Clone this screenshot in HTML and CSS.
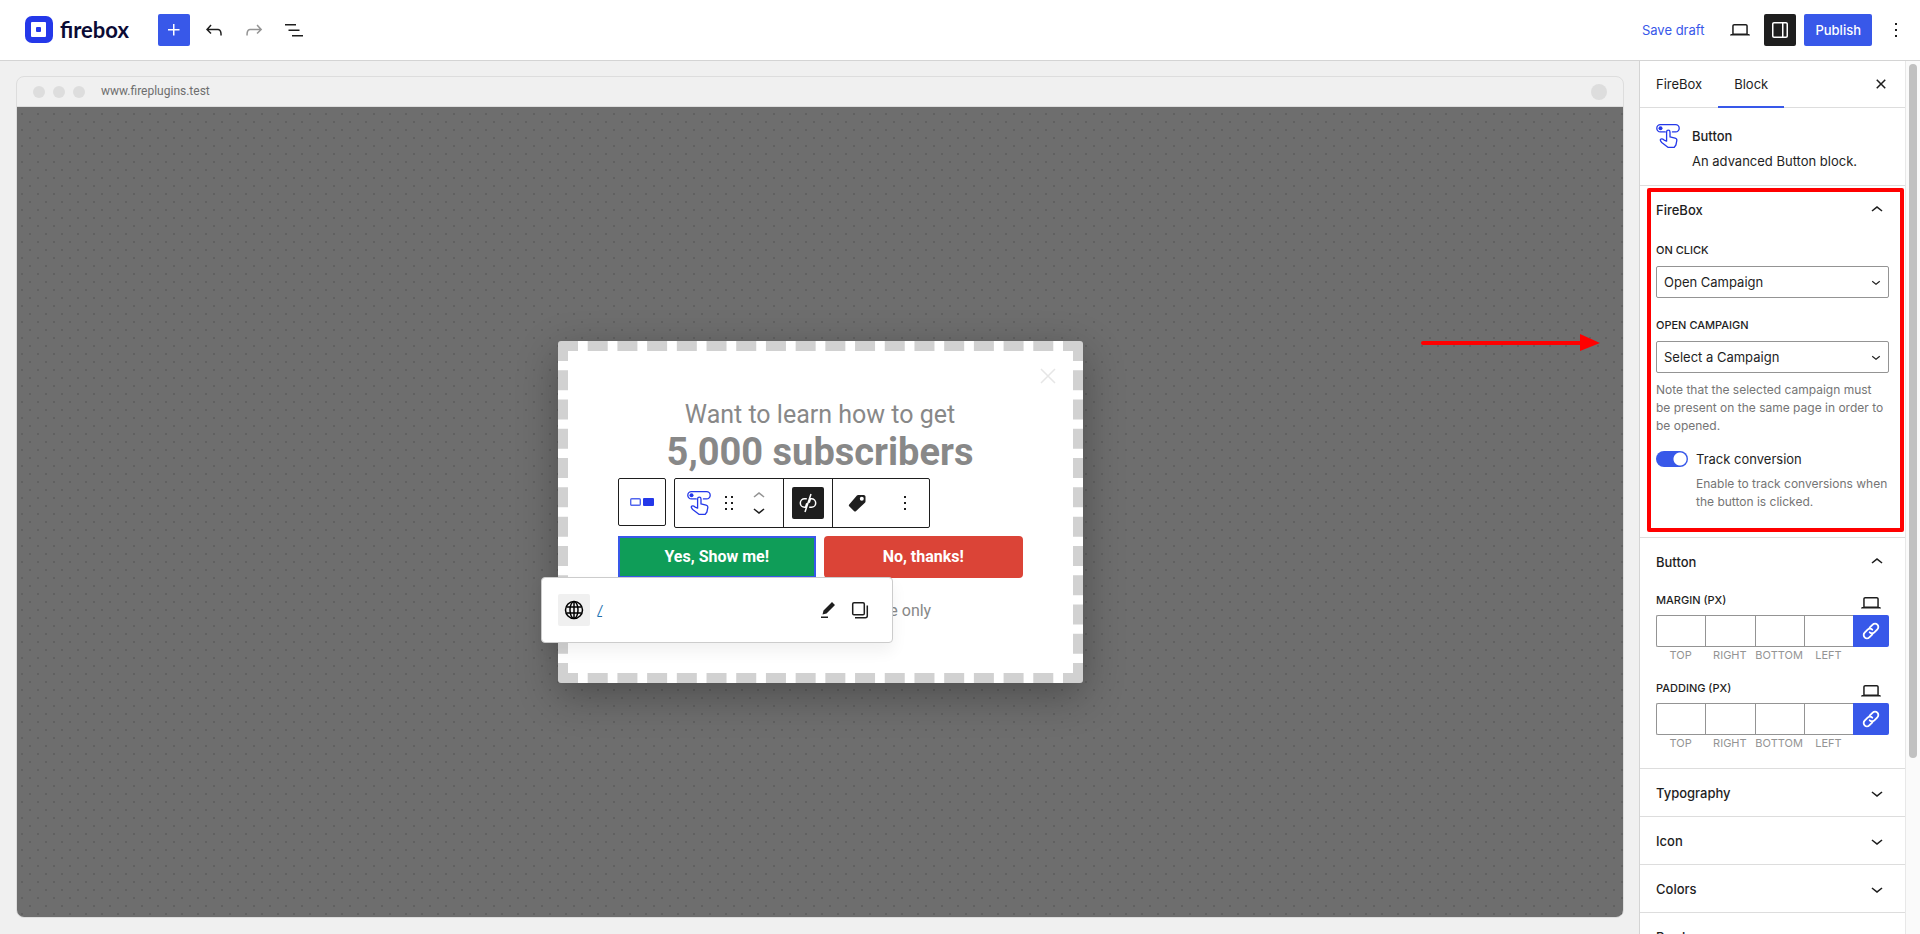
FILE: index.html
```html
<!DOCTYPE html>
<html lang="en">
<head>
    <meta charset="UTF-8">
    <meta name="viewport" content="width=device-width, initial-scale=1.0">
    <title>FireBox</title>
    <link rel="stylesheet" href="styles.css">
</head>
<body>
    <!-- Shared icons -->
    <svg class="sprite" aria-hidden="true">
        <symbol id="chevron-down" viewBox="0 0 24 24"><path d="M17.5 11.6L12 16l-5.5-4.4.9-1.2L12 14l4.5-3.6 1 1.2z"/></symbol>
        <symbol id="chevron-up" viewBox="0 0 24 24"><path d="M6.5 12.4L12 8l5.5 4.4-.9 1.2L12 10l-4.5 3.6-1-1.2z"/></symbol>
        <symbol id="laptop" viewBox="0 0 24 24"><path d="M20.5 16h-.7V8c0-1.1-.9-2-2-2H6.2c-1.1 0-2 .9-2 2v8h-.7c-.8 0-1.5.7-1.5 1.5h20c0-.8-.7-1.5-1.5-1.5zM5.7 8c0-.3.2-.5.5-.5h11.6c.3 0 .5.2.5.5v7.6H5.7V8z"/></symbol>
        <symbol id="more" viewBox="0 0 24 24"><path d="M13 19h-2v-2h2v2zm0-6h-2v-2h2v2zm0-6h-2V5h2v2z"/></symbol>
        <symbol id="tap-button" viewBox="0 0 24 24">
            <g fill="none" stroke="#2438e9" stroke-width="1.3" stroke-linecap="round" stroke-linejoin="round">
                <path d="M9.3 7.9H4.4a3.6 3.6 0 0 1 0-7.2h15.2a3.6 3.6 0 0 1 0 7.2h-3.2"/>
                <path d="M10.6 17.2V7.9a1.7 1.7 0 0 1 3.4 0v5l5.1 1.2c1.2.3 1.9 1.3 1.7 2.5l-.9 4.4-1.7 2.3h-6.3l-6.2-4.9c-1.2-1.1-2-2.8-.8-3.3 1-.4 2.2.1 3.2 1z"/>
            </g>
            <circle cx="4.5" cy="4.3" r="2" fill="#2438e9"/>
        </symbol>
        <symbol id="link" viewBox="0 0 24 24">
            <g fill="none" stroke="#fff" stroke-width="2" stroke-linecap="round" stroke-linejoin="round" transform="rotate(-45 12 12)">
                <path d="M10.5 15.6H5.8a3.6 3.6 0 0 1 0-7.2h4.6a3.6 3.6 0 0 1 3.6 3.6"/>
                <path d="M13.5 8.4h4.7a3.6 3.6 0 0 1 0 7.2h-4.6A3.6 3.6 0 0 1 10 12"/>
            </g>
        </symbol>
    </svg>

    <header class="topbar">
        <a class="logo" href="#home">
            <svg width="28" height="28" viewBox="0 0 28 28" aria-hidden="true">
                <rect width="28" height="27" rx="7" fill="#2438e9"/>
                <rect x="6" y="6" width="15" height="15" rx="1" fill="#fff"/>
                <rect x="11" y="11" width="5" height="5" rx="1" fill="#2438e9"/>
            </svg>
            <span>firebox</span>
        </a>
        <div class="tools">
            <button class="icon-btn primary" aria-label="Add block">
                <svg viewBox="0 0 24 24"><path d="M11 12.5V17.5H12.5V12.5H17.5V11H12.5V6H11V11H6V12.5H11Z"/></svg>
            </button>
            <button class="icon-btn" aria-label="Undo">
                <svg viewBox="0 0 24 24"><path d="M18.3 11.7c-.6-.6-1.4-.9-2.3-.9H6.7l2.9-3.3-1.1-1-4.5 5L8.5 16l1-1-2.7-2.7H16c.5 0 .9.2 1.3.5 1 1 1 3.4 1 4.5v.3h1.5v-.2c0-1.5 0-4.3-1.5-5.7z"/></svg>
            </button>
            <button class="icon-btn faded" aria-label="Redo">
                <svg viewBox="0 0 24 24"><path d="M15.6 6.5l-1.1 1 2.9 3.3H8c-.9 0-1.7.3-2.3.9-1.4 1.5-1.4 4.2-1.4 5.6v.2h1.5v-.3c0-1.1 0-3.5 1-4.5.3-.3.7-.5 1.3-.5h9.2L14.5 15l1.1 1.1 4.6-4.6-4.6-5z"/></svg>
            </button>
            <button class="icon-btn" aria-label="Document overview">
                <svg viewBox="0 0 24 24"><path d="M3 6h11v1.5H3V6Zm3.5 5.5h11V13h-11v-1.5ZM21 17H10v1.5h11V17Z"/></svg>
            </button>
        </div>
        <div class="actions">
            <button class="text-btn">Save draft</button>
            <button class="icon-btn" aria-label="Preview"><svg><use href="#laptop"/></svg></button>
            <button class="icon-btn dark" aria-label="Settings">
                <svg viewBox="0 0 24 24"><path d="M18 4H6c-1.1 0-2 .9-2 2v12c0 1.1.9 2 2 2h12c1.1 0 2-.9 2-2V6c0-1.1-.9-2-2-2zm-4 14.5H6c-.3 0-.5-.2-.5-.5V6c0-.3.2-.5.5-.5h8v13zm4.5-.5c0 .3-.2.5-.5.5h-2.5v-13H18c.3 0 .5.2.5.5v12z"/></svg>
            </button>
            <button class="publish-btn">Publish</button>
            <button class="icon-btn" aria-label="Options"><svg><use href="#more"/></svg></button>
        </div>
    </header>

    <div class="editor">
        <main class="stage">
            <div class="browser">
                <div class="browser-bar">
                    <span class="dot"></span>
                    <span class="dot"></span>
                    <span class="dot"></span>
                    <span class="url">www.fireplugins.test</span>
                    <span class="avatar"></span>
                </div>
                <div class="canvas">
                    <section class="popup">
                        <button class="popup-close" aria-label="Close">
                            <svg viewBox="0 0 16 16"><path d="M1 1l14 14M15 1L1 15" stroke="#e6e6e6" stroke-width="1.5"/></svg>
                        </button>
                        <h2 class="popup-title">Want to learn how to get <strong>5,000 subscribers</strong></h2>
                        <div class="popup-buttons">
                            <button class="cta yes">Yes, Show me!</button>
                            <button class="cta no">No, thanks!</button>

                            <div class="block-toolbar">
                                <div class="toolbar-box">
                                    <button class="tool parent" aria-label="Select parent block">
                                        <svg viewBox="0 0 24 24"><rect x=".7" y="8.7" width="9.6" height="6.6" rx="1" fill="none" stroke="#5266ee" stroke-width="1.4"/><rect x="13" y="8" width="11" height="8" rx="1" fill="#2438e9"/></svg>
                                    </button>
                                </div>
                                <div class="toolbar-box wide">
                                    <div class="segment">
                                        <button class="tool" aria-label="Button"><svg><use href="#tap-button"/></svg></button>
                                        <button class="tool drag" aria-label="Drag">
                                            <svg viewBox="0 0 24 24"><path d="M8 7h2V5H8v2zm0 6h2v-2H8v2zm0 6h2v-2H8v2zm6-14v2h2V5h-2zm0 8h2v-2h-2v2zm0 6h2v-2h-2v2z"/></svg>
                                        </button>
                                        <div class="movers">
                                            <button class="faded" aria-label="Move up"><svg><use href="#chevron-up"/></svg></button>
                                            <button aria-label="Move down"><svg><use href="#chevron-down"/></svg></button>
                                        </div>
                                    </div>
                                    <div class="segment">
                                        <button class="icon-btn dark" aria-label="Unlink">
                                            <svg viewBox="0 0 24 24"><path d="M10.8 7.7H8.6a4.3 4.3 0 0 0 0 8.6h.9l1.3-4.1M13.2 16.3h2.2a4.3 4.3 0 0 0 0-8.6h-.9l-1.3 4.1M15 3L9 21" fill="none" stroke="#fff" stroke-width="1.5"/></svg>
                                        </button>
                                    </div>
                                    <div class="segment spread">
                                        <button class="icon-btn" aria-label="Smart tags">
                                            <svg viewBox="0 0 24 24"><path fill-rule="evenodd" d="M13.2 4h5.5c1 0 1.8.8 1.8 1.8v4.6c0 .5-.2 1-.6 1.4l-9 8.4c-.5.5-1.2.5-1.7 0l-5-4.9c-.5-.5-.5-1.2 0-1.7L11.9 4.6c.3-.4.8-.6 1.3-.6zm3.6 1.8a2 2 0 1 0 0 4 2 2 0 0 0 0-4z"/></svg>
                                        </button>
                                        <button class="icon-btn" aria-label="More options"><svg><use href="#more"/></svg></button>
                                    </div>
                                </div>
                            </div>

                            <div class="link-popover">
                                <button class="icon-btn shaded" aria-label="Link">
                                    <svg viewBox="0 0 24 24"><g fill="none" stroke="#000" stroke-width="1.5"><circle cx="12" cy="12" r="8.5"/><ellipse cx="12" cy="12" rx="4" ry="8.5"/><path d="M12 3.5v17M4.5 9h15M4.5 15h15"/></g></svg>
                                </button>
                                <a href="#link">/</a>
                                <button class="icon-btn edit" aria-label="Edit link">
                                    <svg viewBox="0 0 24 24"><path d="m19 7-3-3-8.5 8.5-1 4 4-1L19 7Zm-7 11.5H5V20h7v-1.5Z"/></svg>
                                </button>
                                <button class="icon-btn" aria-label="Copy link">
                                    <svg viewBox="0 0 24 24"><g fill="none" stroke="#1e1e1e" stroke-width="1.5"><rect x="4.7" y="4.7" width="11.6" height="12" rx="1.3"/><path d="M19.3 7.5v10.2a2 2 0 0 1-2 2H7"/></g></svg>
                                </button>
                            </div>
                        </div>
                        <p class="popup-note">Available for a limited time only</p>
                    </section>
                </div>
            </div>
            <svg class="arrow" viewBox="0 0 180 18" aria-hidden="true"><path d="M2 9h160" stroke="#f00" stroke-width="4" stroke-linecap="round"/><path d="M159 0l20 9-20 8z" fill="#f00"/></svg>
        </main>

        <aside class="sidebar">
            <div class="settings">
                <div class="tabs">
                    <button class="tab">FireBox</button>
                    <button class="tab active">Block</button>
                    <button class="icon-btn close" aria-label="Close settings">
                        <svg viewBox="0 0 24 24"><path d="M12 13.06l3.712 3.713 1.061-1.06L13.061 12l3.712-3.712-1.06-1.06L12 10.938 8.288 7.227l-1.061 1.06L10.939 12l-3.712 3.712 1.06 1.061L12 13.061z"/></svg>
                    </button>
                </div>

                <div class="block-card">
                    <svg><use href="#tap-button"/></svg>
                    <div>
                        <h2>Button</h2>
                        <p>An advanced Button block.</p>
                    </div>
                </div>

                <section class="panel highlighted">
                    <button class="panel-toggle">FireBox <svg><use href="#chevron-up"/></svg></button>
                    <div class="panel-body">
                        <div class="field">
                            <label for="on-click">On click</label>
                            <div class="select">
                                <select id="on-click"><option>Open Campaign</option></select>
                                <svg><use href="#chevron-down"/></svg>
                            </div>
                        </div>
                        <div class="field">
                            <label for="campaign">Open campaign</label>
                            <div class="select">
                                <select id="campaign"><option>Select a Campaign</option></select>
                                <svg><use href="#chevron-down"/></svg>
                            </div>
                            <p class="help">Note that the selected campaign must be present on the same page in order to be opened.</p>
                        </div>
                        <div class="switch">
                            <input type="checkbox" id="track" checked>
                            <div>
                                <label for="track">Track conversion</label>
                                <p class="help">Enable to track conversions when the button is clicked.</p>
                            </div>
                        </div>
                    </div>
                </section>

                <section class="panel">
                    <button class="panel-toggle">Button <svg><use href="#chevron-up"/></svg></button>
                    <div class="panel-body spacing">
                        <fieldset class="sides">
                            <legend>Margin (px)</legend>
                            <button class="device" aria-label="Margin device"><svg><use href="#laptop"/></svg></button>
                            <div class="sides-row">
                                <div class="side"><input type="text" id="margin-top"><label for="margin-top">Top</label></div>
                                <div class="side"><input type="text" id="margin-right"><label for="margin-right">Right</label></div>
                                <div class="side"><input type="text" id="margin-bottom"><label for="margin-bottom">Bottom</label></div>
                                <div class="side"><input type="text" id="margin-left"><label for="margin-left">Left</label></div>
                                <button class="link-sides" aria-label="Link margins"><svg><use href="#link"/></svg></button>
                            </div>
                        </fieldset>
                        <fieldset class="sides">
                            <legend>Padding (px)</legend>
                            <button class="device" aria-label="Padding device"><svg><use href="#laptop"/></svg></button>
                            <div class="sides-row">
                                <div class="side"><input type="text" id="padding-top"><label for="padding-top">Top</label></div>
                                <div class="side"><input type="text" id="padding-right"><label for="padding-right">Right</label></div>
                                <div class="side"><input type="text" id="padding-bottom"><label for="padding-bottom">Bottom</label></div>
                                <div class="side"><input type="text" id="padding-left"><label for="padding-left">Left</label></div>
                                <button class="link-sides" aria-label="Link paddings"><svg><use href="#link"/></svg></button>
                            </div>
                        </fieldset>
                    </div>
                </section>

                <section class="panel">
                    <button class="panel-toggle">Typography <svg><use href="#chevron-down"/></svg></button>
                </section>
                <section class="panel">
                    <button class="panel-toggle">Icon <svg><use href="#chevron-down"/></svg></button>
                </section>
                <section class="panel">
                    <button class="panel-toggle">Colors <svg><use href="#chevron-down"/></svg></button>
                </section>
                <section class="panel">
                    <button class="panel-toggle">Border <svg><use href="#chevron-down"/></svg></button>
                </section>
            </div>
            <div class="scrollbar"><div class="thumb"></div></div>
        </aside>
    </div>
</body>
</html>
```
FILE: styles.css
```css
:root {
    --primary: #3858e9;
    --dark: #1e1e1e;
    --border: #dddddd;
    --field-border: #949494;
    --muted: #757575;
}

* {
    margin: 0;
    padding: 0;
    box-sizing: border-box;
}

body {
    display: flex;
    flex-direction: column;
    height: 100vh;
    overflow: hidden;
    background: #f0f0f0;
    color: var(--dark);
    font-family: Inter, "Liberation Sans", sans-serif;
    font-size: 13px;
    line-height: 20px;
}

button,
input,
select {
    font: inherit;
    color: inherit;
}

button {
    background: none;
    border: none;
    cursor: pointer;
}

svg {
    display: block;
    flex: none;
    width: 24px;
    height: 24px;
    fill: currentColor;
}

.sprite {
    position: absolute;
    width: 0;
    height: 0;
}

/* Top bar */
.topbar {
    display: flex;
    align-items: center;
    flex: none;
    height: 61px;
    padding: 0 8px 0 25px;
    background: white;
    border-bottom: 1px solid #d4d4d4;
}

.logo {
    display: flex;
    align-items: center;
    gap: 7px;
    width: 133px;
    color: #0b0b35;
    font-family: Lato, sans-serif;
    font-size: 22px;
    font-weight: 700;
    text-decoration: none;
}

.logo svg {
    width: 28px;
    height: 28px;
}

.tools,
.actions {
    display: flex;
    align-items: center;
    gap: 8px;
}

.actions {
    margin-left: auto;
}

.icon-btn {
    display: flex;
    align-items: center;
    justify-content: center;
    flex: none;
    width: 32px;
    height: 32px;
    border-radius: 2px;
}

.primary,
.publish-btn {
    background: var(--primary);
    color: white;
}

.dark {
    background: var(--dark);
    color: white;
}

.shaded {
    background: #f0f0f0;
}

.faded {
    color: #949494;
}

.text-btn,
.publish-btn {
    height: 32px;
    padding: 0 12px;
    border-radius: 2px;
}

.text-btn {
    color: var(--primary);
}

.publish-btn {
    padding: 0 11px;
    font-weight: 500;
}

/* Stage */
.editor {
    display: flex;
    flex: 1;
    min-height: 0;
}

.stage {
    position: relative;
    display: flex;
    flex: 1;
    min-width: 0;
    padding: 15px 15px 16px 16px;
}

.browser {
    display: flex;
    flex-direction: column;
    flex: 1;
    border: 1px solid var(--border);
    border-radius: 8px;
    overflow: hidden;
}

.browser-bar {
    display: flex;
    align-items: center;
    gap: 8px;
    height: 30px;
    padding: 0 16px;
    border-bottom: 1px solid var(--border);
    color: #6e6e6e;
    font-family: Roboto, sans-serif;
    font-size: 12px;
}

.dot {
    width: 12px;
    height: 12px;
    border-radius: 50%;
    background: var(--border);
}

.url {
    margin-left: 8px;
    padding-bottom: 2px;
}

.avatar {
    width: 16px;
    height: 16px;
    margin-left: auto;
    border-radius: 50%;
    background: var(--border);
}

.canvas {
    display: flex;
    align-items: center;
    justify-content: center;
    flex: 1;
    background-color: #6e6e6e;
    background-image:
        radial-gradient(circle, #616161 1px, transparent 1px),
        radial-gradient(circle, #616161 1px, transparent 1px);
    background-size: 16px 16px;
    background-position: 13px 15px, 5px 7px;
}

/* Popup */
.popup {
    position: relative;
    width: 525px;
    padding: 50px 50px 52px;
    background: white;
    border: 10px dashed #d1d1d1;
    border-radius: 3px;
    box-shadow: 0 12px 40px rgba(0, 0, 0, 0.3);
    color: #888888;
    font-family: Roboto, sans-serif;
    font-size: 16px;
    text-align: center;
}

.popup-close {
    position: absolute;
    top: 17px;
    right: 17px;
}

.popup-close svg {
    width: 16px;
    height: 16px;
}

.popup-title {
    font-size: 25px;
    font-weight: 400;
    line-height: 28px;
}

.popup-title strong {
    display: block;
    font-size: 38px;
    font-weight: 700;
    line-height: 46px;
}

.popup-buttons {
    position: relative;
    display: flex;
    gap: 8px;
    margin-top: 61px;
}

.cta {
    flex: 1;
    height: 42px;
    border-radius: 4px;
    color: white;
    font-weight: 700;
}

.yes {
    background: #0f9d58;
    border-radius: 0;
    box-shadow: inset 0 0 0 2px var(--primary);
}

.no {
    background: #db4437;
}

.popup-note {
    margin-top: 23px;
    line-height: 20px;
}

/* Block toolbar */
.block-toolbar {
    position: absolute;
    bottom: 50px;
    left: 0;
    display: flex;
    align-items: flex-start;
    gap: 8px;
    color: var(--dark);
}

.toolbar-box {
    display: flex;
    height: 48px;
    background: white;
    border: 1px solid var(--dark);
    border-radius: 2px;
}

.toolbar-box.wide {
    height: 50px;
}

.tool {
    display: flex;
    align-items: center;
    justify-content: center;
    width: 24px;
}

.tool.parent {
    width: 46px;
}

.segment {
    display: flex;
    align-items: center;
    padding: 0 8px;
}

.segment:first-child {
    padding: 0 12px;
    gap: 6px;
}

.segment + .segment {
    border-left: 1px solid var(--dark);
}

.segment.spread {
    gap: 16px;
}

.movers button {
    display: flex;
    align-items: center;
    height: 14px;
}

/* Link popover */
.link-popover {
    position: absolute;
    top: 41px;
    left: -77px;
    display: flex;
    align-items: center;
    width: 352px;
    height: 66px;
    padding: 0 16px;
    background: white;
    border: 1px solid #cccccc;
    border-radius: 4px;
    box-shadow: 0 8px 16px rgba(0, 0, 0, 0.06);
    color: var(--dark);
}

.link-popover a {
    margin-left: 8px;
    color: #2271b1;
    font-family: Inter, sans-serif;
    font-size: 13px;
    font-style: italic;
}

.edit {
    margin-left: auto;
}

.arrow {
    position: absolute;
    top: 273px;
    right: 38px;
    width: 180px;
    height: 18px;
}

/* Sidebar */
.sidebar {
    display: flex;
    flex: none;
    width: 281px;
    background: white;
    border-left: 1px solid #d4d4d4;
}

.settings {
    flex: 1;
    min-width: 0;
    overflow: hidden;
}

.scrollbar {
    width: 15px;
    padding: 3px;
    background: #fafafa;
    border-left: 1px solid #e8e8e8;
}

.thumb {
    width: 8px;
    height: 80%;
    border-radius: 4px;
    background: #c1c1c1;
}

.tabs {
    display: flex;
    align-items: center;
    height: 47px;
    padding-right: 8px;
    border-bottom: 1px solid var(--border);
}

.tab {
    height: 47px;
    padding: 0 16px;
}

.tab.active {
    border-bottom: 2px solid var(--primary);
    padding-top: 2px;
}

.close {
    margin-left: auto;
}

.block-card {
    display: flex;
    gap: 12px;
    padding: 16px 16px 14px;
}

.block-card h2 {
    margin: 2px 0 5px;
    font-size: 13px;
    font-weight: 500;
}

.panel {
    position: relative;
    border-top: 1px solid var(--border);
}

.panel.highlighted::after {
    content: "";
    position: absolute;
    inset: 2px 1px 5px 7px;
    border: 4px solid #ff0000;
    border-radius: 2px;
    pointer-events: none;
}

.panel-toggle {
    display: flex;
    align-items: center;
    justify-content: space-between;
    width: 100%;
    height: 47px;
    padding: 0 16px;
    font-weight: 500;
}

.panel-body {
    padding: 9px 16px 26px;
}

.field {
    margin-bottom: 14px;
}

.field + .field {
    margin-top: 19px;
}

.field > label,
.sides legend {
    display: block;
    font-size: 11px;
    font-weight: 500;
    line-height: 16px;
    text-transform: uppercase;
}

.field > label {
    margin-bottom: 8px;
}

.select {
    position: relative;
}

.select select {
    display: block;
    width: 100%;
    height: 32px;
    padding: 0 24px 0 7px;
    appearance: none;
    background: white;
    border: 1px solid var(--field-border);
    border-radius: 2px;
}

.select svg {
    position: absolute;
    top: 7px;
    right: 4px;
    width: 18px;
    height: 18px;
    pointer-events: none;
}

.help {
    margin-top: 8px;
    color: var(--muted);
    font-size: 12px;
    line-height: 18px;
}

.switch {
    display: flex;
    gap: 8px;
}

.switch .help {
    margin-top: 6px;
}

.switch input {
    flex: none;
    width: 32px;
    height: 16px;
    margin-top: 2px;
    appearance: none;
    border-radius: 8px;
    background: radial-gradient(circle at 24px 8px, white 6px, var(--primary) 7px);
}

/* Spacing controls */
.panel-body.spacing {
    display: grid;
    gap: 15px;
    padding: 6px 16px 16px;
}

.sides {
    display: grid;
    grid-template-columns: 1fr auto;
    border: none;
}

.sides legend {
    float: left;
    margin-top: 1px;
}

.device {
    margin: 0 6px 0 auto;
}

.device svg {
    height: 24px;
}

.sides-row {
    display: flex;
    grid-column: 1 / -1;
}

.side {
    flex: 1;
    min-width: 0;
    text-align: center;
}

.side input {
    display: block;
    width: 100%;
    height: 32px;
    padding: 0 4px;
    border: 1px solid var(--field-border);
    border-right: none;
}

.side:first-child input {
    border-radius: 2px 0 0 2px;
}

.side label {
    display: block;
    color: var(--field-border);
    font-size: 11px;
    line-height: 17px;
    text-transform: uppercase;
}

.link-sides {
    display: flex;
    align-items: center;
    justify-content: center;
    width: 36px;
    height: 32px;
    border-radius: 0 2px 2px 0;
    background: var(--primary);
}

.link-sides svg {
    width: 22px;
    height: 22px;
}
```
